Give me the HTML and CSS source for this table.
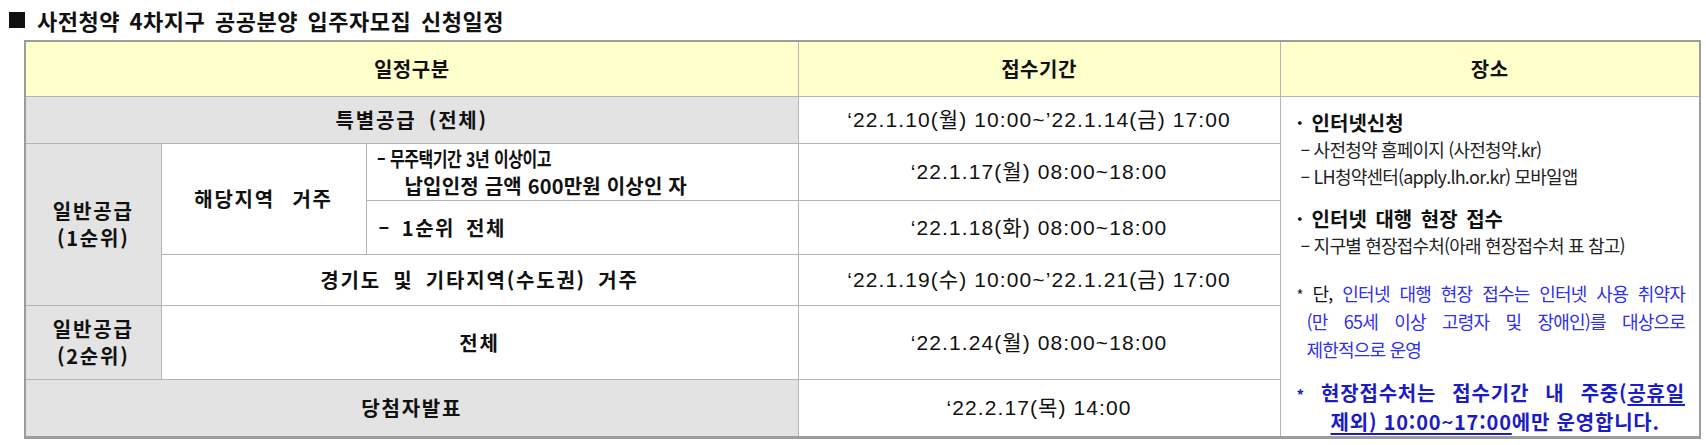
FILE: index.html
```html
<!DOCTYPE html>
<html lang="ko">
<head>
<meta charset="utf-8">
<link rel="stylesheet" href="styles.css">
</head>
<body>
<h1 class="title"><span class="sq" aria-hidden="true"></span>사전청약 4차지구 공공분양 입주자모집 신청일정</h1>
<table class="sched">
  <colgroup>
    <col class="c1"><col class="c2"><col class="c3"><col class="c4"><col class="c5">
  </colgroup>
  <tr class="r-head">
    <th colspan="3">일정구분</th>
    <th>접수기간</th>
    <th>장소</th>
  </tr>
  <tr class="r1">
    <td colspan="3" class="gray">특별공급 (전체)</td>
    <td class="date">‘22.1.10(월) 10:00~’22.1.14(금) 17:00</td>
    <td rowspan="6" class="place">
      <div class="bul">· 인터넷신청</div>
      <div class="sub">– 사전청약 홈페이지 (사전청약.kr)</div>
      <div class="sub">– LH청약센터(apply.lh.or.kr) 모바일앱</div>
      <div class="bul gap1">· 인터넷 대행 현장 접수</div>
      <div class="sub">– 지구별 현장접수처(아래 현장접수처 표 참고)</div>
      <div class="note">
        <span class="jl"><span class="star">*</span> 단, <span class="blue">인터넷 대행 현장 접수는 인터넷 사용 취약자</span></span>
        <span class="jl ind blue">(만 65세 이상 고령자 및 장애인)를 대상으로</span>
        <span class="ind blue">제한적으로 운영</span>
      </div>
      <div class="warn">
        <span class="jl"><span class="star">*</span> 현장접수처는 접수기간 내 주중(<u>공휴일</u></span>
        <span class="ind2"><u>제외) 10:00~17:00</u>에만 운영합니다.</span>
      </div>
    </td>
  </tr>
  <tr class="r2a">
    <td rowspan="3" class="gray">일반공급<br>(1순위)</td>
    <td rowspan="2" class="mid">해당지역 거주</td>
    <td class="left"><span class="l1">– 무주택기간 3년 이상이고</span><br><span class="l2">납입인정 금액 600만원 이상인 자</span></td>
    <td class="date">‘22.1.17(월) 08:00~18:00</td>
  </tr>
  <tr class="r2b">
    <td class="left wide">– 1순위 전체</td>
    <td class="date">‘22.1.18(화) 08:00~18:00</td>
  </tr>
  <tr class="r3">
    <td colspan="2">경기도 및 기타지역(수도권) 거주</td>
    <td class="date">‘22.1.19(수) 10:00~’22.1.21(금) 17:00</td>
  </tr>
  <tr class="r4">
    <td class="gray">일반공급<br>(2순위)</td>
    <td colspan="2">전체</td>
    <td class="date">‘22.1.24(월) 08:00~18:00</td>
  </tr>
  <tr class="r5">
    <td colspan="3" class="gray">당첨자발표</td>
    <td class="date">‘22.2.17(목) 14:00</td>
  </tr>
</table>
</body>
</html>
```
FILE: styles.css
```css
html, body {
  margin: 0;
  padding: 0;
  background: #ffffff;
}
body {
  font-family: "Noto Sans CJK KR", "Noto Sans", sans-serif;
  color: #111111;
}
.title {
  margin: 0;
  height: 40px;
  display: flex;
  align-items: center;
  padding-left: 9px;
  font-size: 22px;
  font-weight: 700;
  letter-spacing: 0.5px;
  word-spacing: 3px;
  color: #111;
}
.sq {
  display: inline-block;
  width: 16px;
  height: 16px;
  background: #111;
  margin-right: 12px;
}
.sched {
  margin-left: 24px;
  border-collapse: collapse;
  table-layout: fixed;
  width: 1675px;
  border: 2px solid #9c9c9c;
  border-bottom: 3px solid #9c9c9c;
  font-size: 20px;
  font-weight: 700;
  letter-spacing: 1.8px;
  word-spacing: 5px;
}
.c1 { width: 136px; }
.c2 { width: 205px; }
.c3 { width: 432px; }
.c4 { width: 482px; }
.c5 { width: 420px; }
.sched th, .sched td {
  border: 1px solid #b4b4b4;
  padding: 0;
  text-align: center;
  vertical-align: middle;
  line-height: 27px;
}
.sched th {
  background: #ffffcc;
  font-weight: 700;
  letter-spacing: 0.5px;
  word-spacing: 0;
}
.sched .gray { background: #e3e3e3; }
.sched td.mid { word-spacing: 10px; }
.r-head { height: 55px; }
.r1 { height: 47px; }
.r2a { height: 57px; }
.r2b { height: 54px; }
.r3 { height: 51px; }
.r4 { height: 74px; }
.r5 { height: 58px; }
.sched td.left {
  text-align: left;
  padding-left: 12px;
  letter-spacing: 0.3px;
  word-spacing: 0;
}
.sched td.wide {
  letter-spacing: 1.5px;
  word-spacing: 4px;
}
.l1 {
  display: inline-block;
  font-size: 20px;
  font-weight: 700;
  letter-spacing: -0.6px;
  word-spacing: 1px;
  transform: scaleX(0.8);
  transform-origin: left center;
  white-space: nowrap;
  margin-left: -2px;
}
.l2 { padding-left: 26px; letter-spacing: 0.2px; }
.sched td.date {
  font-family: "Liberation Sans", "Noto Sans CJK KR", sans-serif;
  font-weight: 400;
  font-size: 21px;
  letter-spacing: 1.1px;
  word-spacing: 0;
  color: #111;
}
.sched td.place {
  vertical-align: top;
  text-align: left;
  padding: 12px 14px 0 20px;
  font-weight: 400;
  font-size: 18px;
  letter-spacing: -0.8px;
  word-spacing: 0;
}
.bul {
  font-weight: 700;
  letter-spacing: 0;
  word-spacing: 3px;
  font-size: 20px;
  margin-left: -4px;
}
.gap1 { margin-top: 15px; }
.sub { color: #222; }
.note {
  margin-top: 21px;
  margin-left: -4px;
  line-height: 27.5px;
}
.note .jl, .note .ind, .warn .jl, .warn .ind2 { display: block; }
.jl {
  text-align: justify;
  text-align-last: justify;
}
.ind { padding-left: 10px; }
.star { font-size: 15px; color: #222; }
.blue { color: #2f2fee; }
.warn {
  margin-top: 16px;
  margin-left: -4px;
  color: #1c1cc4;
  font-weight: 700;
  font-size: 20px;
  letter-spacing: 0.8px;
}
.warn .star { color: #1c1cc4; }
.ind2 { padding-left: 34px; }
.warn u { text-decoration-thickness: 2px; text-underline-offset: 3px; }
```
